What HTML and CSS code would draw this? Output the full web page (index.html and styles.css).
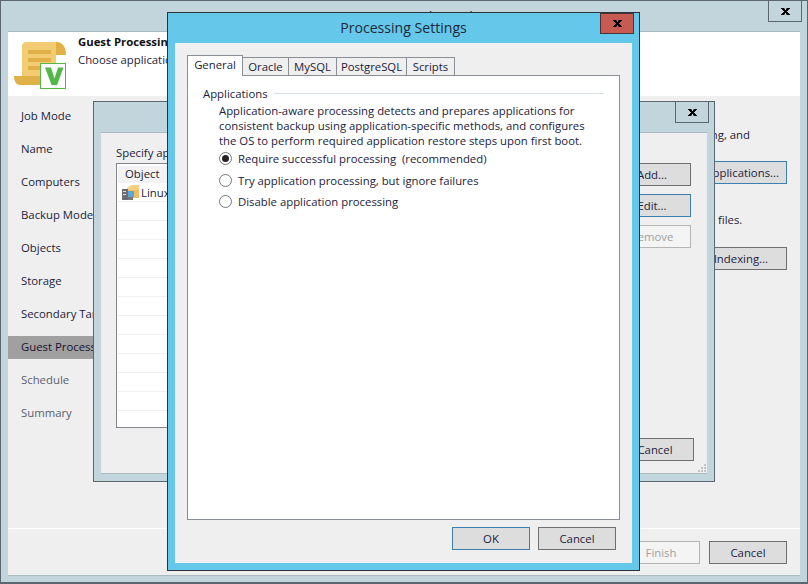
FILE: index.html
```html
<!DOCTYPE html>
<html lang="en">
<head>
<meta charset="utf-8">
<title>Processing Settings</title>
<link rel="stylesheet" href="styles.css">
</head>
<body>
<div class="desktop">
  <section class="win win-main">
    <div class="title main-title">New Agent Backup Job</div>
    <button class="close close-main" aria-label="Close">
      <svg width="9" height="7" viewBox="0 0 9 7"><path d="M0 0h3.500v1H4v1h1V1h.500V0H9v1H8v1H7v1H6v1h1v1h1v1h1v1H5.500V6H5V5H4v1h-.500v1H0V6h1V5h1V4h1V3H2V2H1V1H0z" fill="#000"/></svg>
    </button>
    <div class="main-client">
      <header class="head">
        <svg class="scroll" width="52" height="47" viewBox="0 0 52 47">
          <path d="M12 0h33l-3 6v29H8V4c0-2 2-4 4-4z" fill="#f2cb72"/>
          <path d="M42 0c6 0 10 4 10 13H42z" fill="#dfb146"/>
          <path d="M0 34h30c0 4 1 7 3 9H6c-4 0-6-4-6-9z" fill="#dfb146"/>
          <path d="M14 8h23v4H14zM14 16h23v4H14zM14 24h15v4H14z" fill="#dfb146"/>
          <rect x="26.500" y="21.500" width="25" height="25" fill="#fff" stroke="#54b848"/>
          <path d="M31 25.500h6l3.500 11 3.500-11h5.500L43 43h-5.500z" fill="#54b848"/>
        </svg>
        <div class="head-text">
          <div class="head-title">Guest Processing</div>
          <div>Choose application</div>
        </div>
      </header>
      <div class="main-body">
        <nav class="steps">
          <div class="step">Job Mode</div>
          <div class="step">Name</div>
          <div class="step">Computers</div>
          <div class="step">Backup Mode</div>
          <div class="step">Objects</div>
          <div class="step">Storage</div>
          <div class="step">Secondary Target</div>
          <div class="step current">Guest Processing</div>
          <div class="step muted">Schedule</div>
          <div class="step muted">Summary</div>
        </nav>
        <div class="main-right">
          <p class="frag frag-and">logging, and</p>
          <button class="btn focus btn-apps">Applications...</button>
          <p class="frag frag-files">files.</p>
          <button class="btn btn-index">Indexing...</button>
        </div>
      </div>
      <footer class="main-foot">
        <button class="btn disabled">Finish</button>
        <button class="btn">Cancel</button>
      </footer>
    </div>
  </section>

  <section class="win win-mid">
    <button class="close close-mid" aria-label="Close">
      <svg width="9" height="7" viewBox="0 0 9 7"><path d="M0 0h3.500v1H4v1h1V1h.500V0H9v1H8v1H7v1H6v1h1v1h1v1h1v1H5.500V6H5V5H4v1h-.500v1H0V6h1V5h1V4h1V3H2V2H1V1H0z" fill="#000"/></svg>
    </button>
    <div class="mid-client">
      <div class="specify">Specify application</div>
      <div class="list">
        <div class="list-head">Object</div>
        <div class="row first">
          <svg width="18" height="17" viewBox="0 0 18 17">
            <path d="M5 4l5-3h7v12H5z" fill="#f3cf7f"/>
            <path d="M5 6h12v8H5z" fill="#eebd5c"/>
            <rect x="0" y="5" width="6" height="11" fill="#6d6d6d"/>
            <rect x="6" y="7" width="6" height="6" fill="#5aa7dc"/>
            <path d="M1 7h3v1H1zM1 10h3v1H1z" fill="#ddd"/>
            <rect x="6" y="13" width="5" height="3" fill="#777"/>
          </svg>
          <span>Linux</span>
        </div>
        <div class="row"></div>
        <div class="row"></div>
        <div class="row"></div>
        <div class="row"></div>
        <div class="row"></div>
        <div class="row"></div>
        <div class="row"></div>
        <div class="row"></div>
        <div class="row"></div>
        <div class="row"></div>
        <div class="row"></div>
        <div class="row"></div>
      </div>
      <button class="btn btn-add">Add...</button>
      <button class="btn focus btn-edit">Edit...</button>
      <button class="btn disabled btn-remove">Remove</button>
      <button class="btn btn-midcancel">Cancel</button>
      <svg class="grip" width="9" height="9" viewBox="0 0 9 9">
        <path d="M7 1h2v2H7zM4 4h2v2H4zM7 4h2v2H7zM1 7h2v2H1zM4 7h2v2H4zM7 7h2v2H7z" fill="#c4c4c4"/>
      </svg>
    </div>
  </section>

  <section class="win win-modal">
    <div class="title modal-title">Processing Settings</div>
    <button class="close close-modal" aria-label="Close">
      <svg width="9" height="7" viewBox="0 0 9 7"><path d="M0 0h3.500v1H4v1h1V1h.500V0H9v1H8v1H7v1H6v1h1v1h1v1h1v1H5.500V6H5V5H4v1h-.500v1H0V6h1V5h1V4h1V3H2V2H1V1H0z" fill="#000"/></svg>
    </button>
    <div class="modal-client">
      <div class="tabs">
        <div class="tab active">General</div>
        <div class="tab tab-oracle">Oracle</div>
        <div class="tab tab-mysql">MySQL</div>
        <div class="tab tab-pg">PostgreSQL</div>
        <div class="tab tab-scripts">Scripts</div>
      </div>
      <div class="pane">
        <div class="group"><span>Applications</span><i class="rule"></i></div>
        <div class="desc">
          <div>Application-aware processing detects and prepares applications for</div>
          <div>consistent backup using application-specific methods, and configures</div>
          <div>the OS to perform required application restore steps upon first boot.</div>
        </div>
        <div class="radios">
          <div class="radio on"><b></b><span>Require successful processing&nbsp; (recommended)</span></div>
          <div class="radio"><b></b><span>Try application processing, but ignore failures</span></div>
          <div class="radio"><b></b><span>Disable application processing</span></div>
        </div>
      </div>
      <div class="modal-foot">
        <button class="btn focus">OK</button>
        <button class="btn">Cancel</button>
      </div>
    </div>
  </section>
</div>
</body>
</html>
```
FILE: styles.css
```css
* { box-sizing: border-box; }
html, body { margin: 0; padding: 0; }
body { font: 11.350px/15px "Open Sans", sans-serif; color: #1c1c3c; background: #c3d5dc; }
.desktop { position: relative; width: 808px; height: 584px; overflow: hidden; }
.win { position: absolute; border: 1px solid #5c666e; background: #c3d5dc; }
.win-main { left: 0; top: 0; width: 808px; height: 584px; border-width: 1px 1px 2px 1px; }
.win-mid { left: 93px; top: 101px; width: 622px; height: 381px; }
.win-modal { left: 167px; top: 12px; width: 473px; height: 559px; background: #65c8ea; border-color: #2b3238; }
.title { text-align: center; font-size: 14.100px; line-height: 20px; }
.main-title { position: absolute; left: 0; right: 0; top: 6px; }
.modal-title { margin-top: 5px; color: #20283a; }
.close { position: absolute; padding: 0; border: 1px solid #5c666e; background: transparent; width: 34px; height: 22px; display: flex; align-items: center; justify-content: center; }
.close-main { top: -1px; left: 767px; }
.close-mid { top: -1px; left: 581px; }
.close-modal { top: 0; left: 432px; height: 21px; background: #c75b52; border-color: #4b3434; }
.main-client { position: absolute; left: 7px; top: 30px; width: 792px; height: 545px; background: #efefef; border-top: 1px solid #a9bac1; border-bottom: 1px solid #a9bac1; display: flex; flex-direction: column; }
.head { height: 64px; background: #fff; display: flex; flex: none; }
.scroll { margin: 10px 0 0 6px; }
.head-text { margin: 1px 0 0 12px; line-height: 18px; }
.head-title { font-weight: 700; color: #111; }
.main-body { position: relative; flex: 1; display: flex; }
.steps { width: 280px; padding-top: 9px; }
.step { height: 33px; line-height: 22px; padding-left: 13px; }
.step.current { background: #a0a0a0; color: #1a1030; height: 23px; margin-bottom: 10px; }
.step.muted { color: #5d6070; }
.main-right { flex: 1; position: relative; }
.frag { position: absolute; margin: 0; }
.frag-and { right: 50px; top: 31px; }
.frag-files { left: 430px; top: 116px; }
.btn { display: block; width: 78px; height: 23px; padding: 0; border: 1px solid #707070; background: #dddddd; font: 11.350px/15px "Open Sans", sans-serif; color: #1c1c3c; }
.btn.focus { border-color: #3c7fb1; }
.btn.disabled { border-color: #b5b5b5; background: #f4f4f4; color: #a0a0a0; }
.btn-apps { position: absolute; left: 383px; top: 65px; width: 116px; text-align: right; padding-right: 7px; }
.btn-index { position: absolute; left: 383px; top: 151px; width: 116px; text-align: right; padding-right: 18px; }
.main-foot { flex: none; height: 47px; border-top: 1px solid #fff; display: flex; justify-content: flex-end; gap: 9px; padding: 12px 13px 0 0; }
.mid-client { position: absolute; left: 7px; top: 30px; width: 606px; height: 342px; background: #efefef; border-top: 1px solid #a9bac1; border-bottom: 1px solid #a9bac1; }
.specify { position: absolute; left: 15px; top: 12px; }
.list { position: absolute; left: 15px; top: 30px; width: 200px; height: 265px; background: #fff; border: 1px solid #82868a; padding: 2px 1px 0; overflow: hidden; }
.list-head { height: 17px; line-height: 15px; padding-left: 7px; background: #f2f2f2; }
.row { height: 19px; border-bottom: 1px solid #efefef; display: flex; align-items: center; gap: 1px; padding-left: 4px; }
.btn-add { position: absolute; left: 512px; top: 30px; }
.btn-edit { position: absolute; left: 512px; top: 61px; }
.btn-remove { position: absolute; left: 512px; top: 92px; }
.btn-midcancel { position: absolute; left: 515px; top: 305px; }
.grip { position: absolute; right: 1px; bottom: 1px; }
.modal-client { position: absolute; left: 7px; top: 30px; width: 457px; height: 520px; background: #efefef; }
.tabs { position: absolute; left: 12px; top: 12px; display: flex; align-items: flex-end; height: 21px; }
.tab { height: 19px; width: 46px; padding-top: 1px; text-align: center; border: 1px solid #8a8f96; border-bottom: 0; border-left: 0; background: #efefef; }
.tab-mysql { width: 48px; }
.tab-pg { width: 70px; }
.tab-scripts { width: 48px; }
.tab.active { height: 21px; width: 56px; padding-top: 1px; border-left: 1px solid #8a8f96; background: #fff; position: relative; z-index: 1; }
.pane { position: absolute; left: 12px; top: 32px; width: 433px; height: 445px; background: #fff; border: 1px solid #8a8f96; padding: 10px 15px 0; }
.group { display: flex; align-items: center; gap: 6px; }
.rule { flex: 1; height: 1px; background: #d5dfe5; }
.desc { margin: 2px 0 0 16px; }
.radios { margin: 0 0 0 16px; }
.radio { display: flex; align-items: center; height: 21.500px; gap: 6px; }
.radio b { width: 13px; height: 13px; border: 1px solid #777; border-radius: 50%; background: #fff; display: flex; align-items: center; justify-content: center; }
.radio.on b::after { content: ""; width: 7px; height: 7px; border-radius: 50%; background: #222; }
.modal-foot { position: absolute; right: 16px; top: 484px; display: flex; gap: 8px; }
```
